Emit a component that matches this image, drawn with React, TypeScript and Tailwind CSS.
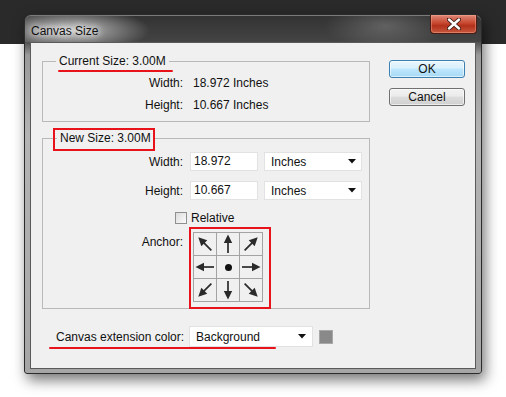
import React from "react";

const font = "font-['Liberation_Sans','Arial',sans-serif]";

function Arrow({ rot }: { rot: number }) {
  return (
    <svg width="22" height="22" viewBox="0 0 22 22" style={{ transform: `rotate(${rot}deg)` }} overflow="visible">
      <line x1="11" y1="20" x2="11" y2="8" stroke="#2a2a2a" strokeWidth="1.7" />
      <polygon points="11,1.5 6.8,10 15.2,10" fill="#2a2a2a" />
    </svg>
  );
}

function Cell({ children }: { children?: React.ReactNode }) {
  return (
    <div className="w-[23px] h-[23px] border-r border-b border-[#a3a3a3] flex items-center justify-center">
      {children}
    </div>
  );
}

function Caret() {
  return (
    <svg width="8" height="5" viewBox="0 0 8 5">
      <polygon points="0,0 8,0 4,4.5" fill="#111" />
    </svg>
  );
}

export default function App() {
  return (
    <div
      className={`w-[506px] h-[397px] overflow-hidden bg-[linear-gradient(#2a2a2a_44px,#ffffff_44px)] pt-[14px] pl-[24px] text-[12px] text-[#111] ${font}`}
    >
      <div className="w-[458px] h-[360px] rounded-t-[7px] rounded-b-[3px] border border-[#2b2b2b] flex flex-col shadow-[3px_6px_14px_rgba(0,0,0,0.55)] bg-[linear-gradient(#3a3a3a_0px,#4a4a4a_26px,#9a9a9a_40px,#b4b4b4_120px,#a6a6a6_100%)]">
        {/* title bar */}
        <div className="h-[27px] flex justify-between rounded-t-[6px] bg-[radial-gradient(ellipse_80px_22px_at_45px_14px,rgba(225,225,225,0.85),rgba(200,200,200,0)),radial-gradient(ellipse_60px_24px_at_360px_10px,rgba(170,170,170,0.35),rgba(170,170,170,0)),linear-gradient(#333333,#444444)] border-t border-[#7a7a7a]">
          <div className="pl-[6px] pt-[6px] text-[12px] text-[#111] [text-shadow:0_0_6px_#fff,0_0_10px_#fff]">Canvas Size</div>
          <div className="mr-[4px] -mt-[1px] w-[47px] h-[19px] rounded-b-[4px] border border-[#4a1d14] border-t-0 bg-[linear-gradient(#e08a78,#c7472f_45%,#b2301a_60%,#c95a3f)] flex items-center justify-center shadow-[inset_0_0_0_1px_rgba(255,180,160,0.4)]">
            <svg width="14" height="12" viewBox="0 0 14 12">
              <path d="M2 1.5 L12 10.5 M12 1.5 L2 10.5" stroke="#3a1a14" strokeWidth="4.2" strokeLinecap="round" />
              <path d="M2 1.5 L12 10.5 M12 1.5 L2 10.5" stroke="#ffffff" strokeWidth="2.4" strokeLinecap="round" />
            </svg>
          </div>
        </div>
        {/* client */}
        <div className="mx-[5px] mb-[4px] flex-1 border border-[#5a5a5a] bg-[#f0f0f0] flex">
          <div className="pl-[11px] w-[339px] flex flex-col">
            {/* Current size */}
            <fieldset className="mt-[11px] w-[328px] h-[68px] border border-[#b9b9b9]">
              <legend className="ml-[13px] px-[3px] relative leading-[14px]">
                Current Size: 3.00M
                <div className="absolute left-[2px] top-[16px] w-[115px] h-[2px] bg-[#e8121a] rounded-full" />
              </legend>
              <div className="mt-[8px] flex leading-[14px]">
                <div className="w-[140px] text-right">Width:</div>
                <div className="ml-[10px]">18.972 Inches</div>
              </div>
              <div className="mt-[8px] flex leading-[14px]">
                <div className="w-[140px] text-right">Height:</div>
                <div className="ml-[10px]">10.667 Inches</div>
              </div>
            </fieldset>
            {/* New size */}
            <fieldset className="mt-[9px] w-[328px] h-[178px] border border-[#b9b9b9]">
              <legend className="ml-[14px] px-[3px] relative leading-[14px]">
                New Size: 3.00M
                <div className="absolute -left-[4px] -top-[3px] w-[102px] h-[23px] border-2 border-[#e8121a]" />
              </legend>
              <div className="mt-[7px] flex items-center h-[19px]">
                <div className="w-[140px] text-right">Width:</div>
                <div className="ml-[7px] w-[68px] h-[19px] bg-white border border-[#e2e2e2] pl-[3px] leading-[17px]">18.972</div>
                <div className="ml-[6px] w-[98px] h-[19px] bg-white border border-[#e2e2e2] pl-[6px] pr-[5px] flex items-center justify-between">
                  <span>Inches</span>
                  <Caret />
                </div>
              </div>
              <div className="mt-[10px] flex items-center h-[19px]">
                <div className="w-[140px] text-right">Height:</div>
                <div className="ml-[7px] w-[68px] h-[19px] bg-white border border-[#e2e2e2] pl-[3px] leading-[17px]">10.667</div>
                <div className="ml-[6px] w-[98px] h-[19px] bg-white border border-[#e2e2e2] pl-[6px] pr-[5px] flex items-center justify-between">
                  <span>Inches</span>
                  <Caret />
                </div>
              </div>
              <div className="mt-[11px] flex items-center h-[14px] pl-[132px]">
                <div className="w-[12px] h-[12px] border border-[#8e8f8f] bg-[linear-gradient(135deg,#dcdcdc,#fbfbfb)]" />
                <span className="ml-[4px]">Relative</span>
              </div>
              <div className="mt-[7px] flex">
                <div className="w-[140px] text-right pt-[1px]">Anchor:</div>
                <div className="ml-[10px] relative">
                  <div className="grid grid-cols-[23px_23px_23px] border-l border-t border-[#a3a3a3] w-[70px]">
                    <Cell><Arrow rot={-45} /></Cell>
                    <Cell><Arrow rot={0} /></Cell>
                    <Cell><Arrow rot={45} /></Cell>
                    <Cell><Arrow rot={-90} /></Cell>
                    <Cell><div className="w-[7px] h-[7px] rounded-full bg-[#111]" /></Cell>
                    <Cell><Arrow rot={90} /></Cell>
                    <Cell><Arrow rot={-135} /></Cell>
                    <Cell><Arrow rot={180} /></Cell>
                    <Cell><Arrow rot={135} /></Cell>
                  </div>
                  <div className="absolute -left-[4px] -top-[5px] w-[82px] h-[82px] border-2 border-[#e8121a]" />
                </div>
              </div>
            </fieldset>
            {/* extension color */}
            <div className="mt-[17px] relative flex items-center h-[21px] pl-[14px]">
              <span className="w-[133px]">Canvas extension color:</span>
              <div className="w-[124px] h-[21px] bg-white border border-[#e2e2e2] pl-[6px] pr-[6px] flex items-center justify-between">
                <span>Background</span>
                <Caret />
              </div>
              <div className="ml-[6px] w-[14px] h-[14px] bg-[#898989] border border-[#a8a8a8]" />
              <div className="absolute left-[7px] top-[21px] w-[227px] h-[2px] bg-[#e8121a] rounded-full" />
            </div>
          </div>
          {/* buttons */}
          <div className="pl-[19px] pt-[17px] flex flex-col">
            <div className="w-[76px] h-[18px] rounded-[3px] border border-[#3c7fb1] bg-[linear-gradient(#eaf6fd_0%,#d9f0fc_45%,#bee6fd_50%,#a7d9f5_100%)] shadow-[inset_0_0_0_1px_rgba(255,255,255,0.6)] flex items-center justify-center leading-none">
              OK
            </div>
            <div className="mt-[10px] w-[76px] h-[18px] rounded-[3px] border border-[#707070] bg-[linear-gradient(#f2f2f2_0%,#ebebeb_45%,#dddddd_50%,#cfcfcf_100%)] shadow-[inset_0_0_0_1px_rgba(255,255,255,0.6)] flex items-center justify-center leading-none">
              Cancel
            </div>
          </div>
        </div>
      </div>
    </div>
  );
}
